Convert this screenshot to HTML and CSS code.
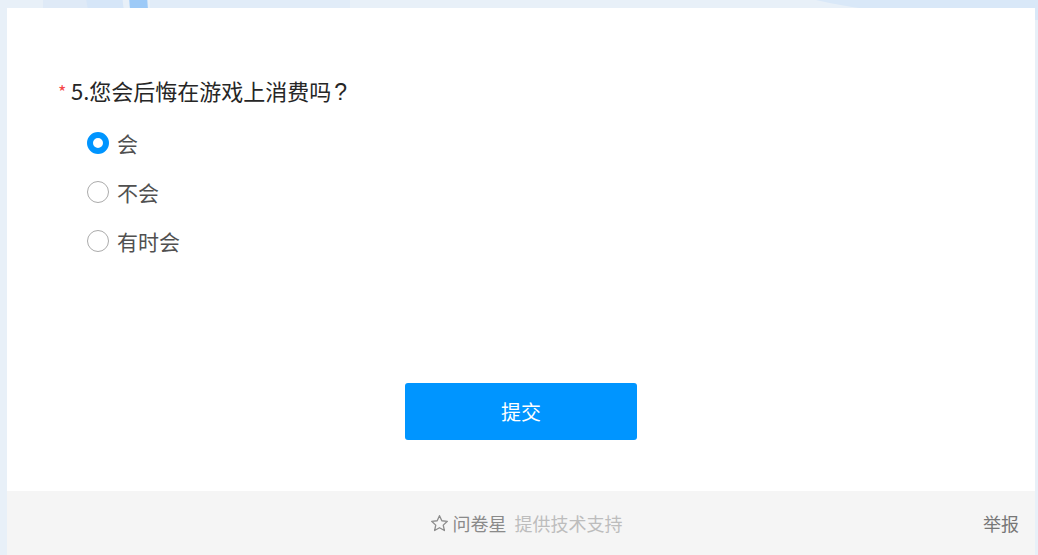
FILE: index.html
```html
<!DOCTYPE html>
<html lang="zh">
<head>
<meta charset="utf-8">
<title>问卷</title>
<link rel="stylesheet" href="styles.css">
</head>
<body>
<div class="bg">
  <div class="deco d1"></div>
  <div class="deco d2"></div>
  <div class="deco d3"></div>
  <div class="deco d4"></div>
  <div class="deco d5"></div>
</div>
<div class="page">
  <div class="card">
    <div class="question">
      <div class="q-title"><span class="req">*</span><span class="q-text">5.您会后悔在游戏上消费吗<span class="qm">?</span></span></div>
      <div class="options">
        <label class="option"><span class="radio checked"></span><span class="opt-text">会</span></label>
        <label class="option"><span class="radio"></span><span class="opt-text">不会</span></label>
        <label class="option"><span class="radio"></span><span class="opt-text">有时会</span></label>
      </div>
    </div>
    <div class="submit-wrap"><button class="submit">提交</button></div>
    <div class="footer">
      <div class="brand">
        <svg class="star" viewBox="0 0 20 20" width="19" height="19"><path d="M10 1.8l2.45 5.3 5.8.65-4.3 3.95 1.2 5.7L10 14.5l-5.15 2.9 1.2-5.7L1.75 7.75l5.8-.65z" fill="none" stroke="#8c8c8c" stroke-width="1.4" stroke-linejoin="round"/></svg>
        <span class="brand-name">问卷星</span>
        <span class="brand-sub">提供技术支持</span>
      </div>
      <a class="report">举报</a>
    </div>
  </div>
</div>
</body>
</html>
```

FILE: styles.css
```css
html, body {
  margin: 0;
  padding: 0;
}
body {
  background: #e8f0f8;
  font-family: "Noto Sans CJK SC", "Noto Sans", sans-serif;
  overflow: hidden;
  height: 555px;
  position: relative;
}
.bg {
  position: absolute;
  left: 0;
  top: 0;
  width: 1038px;
  height: 40px;
  overflow: hidden;
  z-index: 0;
}
.deco {
  position: absolute;
}
.d1 {
  left: 43px; top: -20px; width: 80px; height: 60px;
  background: #dfeaf7;
}
.d2 {
  left: 88px; top: -10px; width: 36px; height: 40px;
  background: #d6e6f8;
  transform: skewX(10deg);
}
.d3 {
  left: 130px; top: -10px; width: 18px; height: 40px;
  background: #9dcaf7;
  transform: skewX(4deg);
}
.d4 {
  left: 150px; top: -10px; width: 200px; height: 30px;
  background: #e1ecf8;
}
.d5 {
  left: 760px; top: -30px; width: 280px; height: 50px;
  background: #d9e8f8;
  border-radius: 0 0 0 100% / 0 0 0 100%;
}
.page {
  position: relative;
  z-index: 1;
  padding: 8px 3px 0 7px;
}
.card {
  background: #fff;
  display: flex;
  flex-direction: column;
}
.question {
  padding: 68px 0 0 51px;
}
.q-title {
  display: flex;
  align-items: center;
  height: 28px;
  color: #262626;
  font-size: 22px;
}
.req {
  color: #f5484a;
  font-size: 18px;
  width: 13px;
  margin-top: 2px;
}
.q-text {
  white-space: nowrap;
}
.qm {
  font-family: "Liberation Sans", Arial, sans-serif;
  font-size: 23px;
  margin-left: 3px;
}
.options {
  display: flex;
  flex-direction: column;
  padding: 14px 0 0 29px;
}
.option {
  display: flex;
  align-items: center;
  height: 49px;
  gap: 8px;
}
.radio {
  box-sizing: border-box;
  width: 22px;
  height: 22px;
  border-radius: 50%;
  border: 1.5px solid #ababab;
  background: #fff;
}
.radio.checked {
  border: 6px solid #0095ff;
}
.opt-text {
  font-size: 21px;
  color: #505050;
}
.submit-wrap {
  display: flex;
  justify-content: center;
  padding: 118px 0 51px;
}
.submit {
  width: 232px;
  height: 57px;
  border: none;
  border-radius: 3px;
  background: #0095ff;
  color: #fff;
  font-family: inherit;
  font-size: 20px;
}
.footer {
  background: #f5f5f5;
  height: 64px;
  display: flex;
  align-items: center;
  justify-content: center;
  position: relative;
  font-size: 18px;
}
.brand {
  display: flex;
  align-items: center;
  margin-left: 10px;
}
.star {
  margin-right: 4px;
}
.brand-name {
  color: #8a8a8a;
  margin-right: 8px;
}
.brand-sub {
  color: #bdbdbd;
}
.report {
  position: absolute;
  right: 16px;
  top: 50%;
  transform: translateY(-50%);
  color: #777;
  font-size: 18px;
}
```
